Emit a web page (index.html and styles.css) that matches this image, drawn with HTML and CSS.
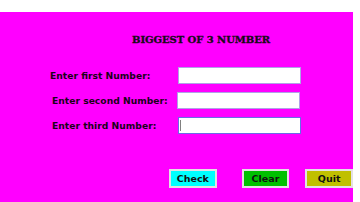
FILE: index.html
```html
<!DOCTYPE html>
<html>
<head>
<meta charset="utf-8">
<link rel="stylesheet" href="styles.css">
</head>
<body>
<div class="panel">
  <div class="title">BIGGEST OF 3 NUMBER</div>
  <div class="form">
    <div class="row r1"><span class="label">Enter first Number:</span><input class="field" type="text"></div>
    <div class="row r2"><span class="label">Enter second Number:</span><input class="field" type="text"></div>
    <div class="row r3"><span class="label">Enter third Number:</span><input class="field focus" type="text"><span class="caret"></span></div>
  </div>
  <div class="buttons">
    <button class="btn check">Check</button>
    <button class="btn clear">Clear</button>
    <button class="btn quit">Quit</button>
  </div>
</div>
</body>
</html>
```
FILE: styles.css
```css
html, body { margin: 0; padding: 0; background: #ffffff; }
body { width: 360px; height: 202px; overflow: hidden; }
.panel {
  margin-top: 12px;
  width: 353px;
  height: 190px;
  background: #ff00ff;
  display: flex;
  flex-direction: column;
}
.title {
  padding: 22px 0 0 132px;
  height: 12px;
  font-family: "DejaVu Serif", serif;
  font-weight: bold;
  font-size: 10px;
  line-height: 12px;
  color: #1a0a1a;
  letter-spacing: -0.05px;
  -webkit-text-stroke: 0.35px #1a0a1a;
}
.form {
  margin-top: 21px;
  display: flex;
  flex-direction: column;
  gap: 8px;
}
.row {
  display: flex;
  align-items: center;
  height: 17px;
  position: relative;
}
.label {
  font-family: "DejaVu Sans", sans-serif;
  font-weight: bold;
  font-size: 9.2px;
  color: #1a001a;
}
.r1 .label { margin-left: 50px; width: 128px; }
.r2 .label { margin-left: 52px; width: 125px; }
.r3 .label { margin-left: 52px; width: 126px; }
.field {
  box-sizing: border-box;
  width: 123px;
  height: 17px;
  margin: 0;
  padding: 0;
  border: 1px solid #b0a0e8;
  background: #ffffff;
  outline: none;
}
.field.focus { border-color: #6a6ae8; }
.caret {
  position: absolute;
  left: 180px;
  top: 3px;
  width: 1px;
  height: 11px;
  background: #808080;
}
.buttons {
  margin-top: 35px;
  display: flex;
  padding-left: 169px;
}
.btn {
  box-sizing: border-box;
  width: 48px;
  height: 19px;
  margin: 0;
  padding: 0;
  border: 2px solid #e4e0e4;
  font-family: "DejaVu Sans", sans-serif;
  font-weight: bold;
  font-size: 9.5px;
  color: #101010;
}
.check { background: #00ffff; }
.clear { background: #00c000; margin-left: 25px; }
.quit { background: #c0c000; margin-left: 16px; }
```
